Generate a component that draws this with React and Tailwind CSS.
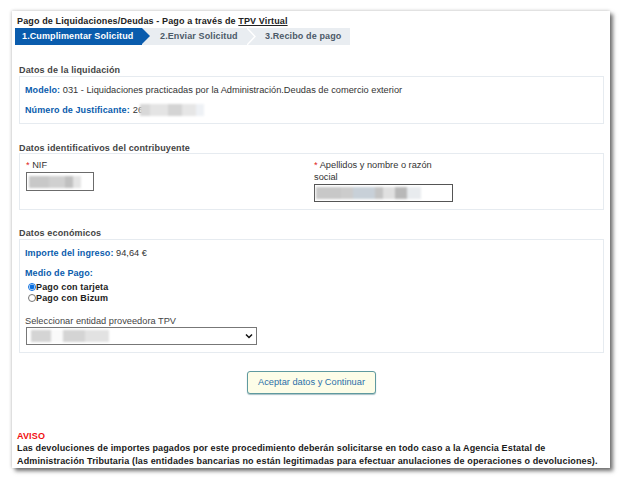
import React from "react";

const Redact = ({ blocks, className = "" }) => (
  <span className={`flex h-[12px] overflow-hidden blur-[1px] ${className}`}>
    {blocks.map(([w, c], i) => (
      <span key={i} className="block h-full" style={{ width: w, backgroundColor: c }} />
    ))}
  </span>
);

const Section = ({ title, className = "", boxClass = "", headClass = "leading-[11px]", children }) => (
  <section className={className}>
    <h2 className={`ml-[7px] text-[9px] font-bold tracking-[0.14px] text-[#444] ${headClass}`}>{title}</h2>
    <div className={`ml-[7px] mr-[6px] border border-[#e6ebf0] ${boxClass}`}>{children}</div>
  </section>
);

export default function App() {
  return (
    <div className="h-[479px] w-[621px] overflow-hidden bg-white pl-[12px] pt-[11px] font-['Liberation_Sans',Arial,sans-serif] text-[#333]">
      <div className="flex h-[457px] w-[598px] flex-col shadow-[3px_3px_4px_rgba(0,0,0,0.55),0_-1px_3px_rgba(0,0,0,0.08),-1px_0_3px_rgba(0,0,0,0.12)]">
        <h1 className="ml-[5px] mt-[5px] whitespace-nowrap text-[9px] leading-[11px] font-bold tracking-[0.13px] text-[#222]">
          Pago de Liquidaciones/Deudas - Pago a través de <span className="underline">TPV Virtual</span>
        </h1>

        <div className="ml-[3px] mt-[1px] flex h-[17px] w-[335px] items-stretch whitespace-nowrap bg-[#e9edf1] text-[9px] font-bold tracking-[0.12px] text-[#4c5a68]">
          <div className="relative flex w-[127px] shrink-0 items-center bg-[#0a5cad] pl-[7px] text-white">
            1.Cumplimentar Solicitud
            <span className="absolute left-[127px] top-0 h-0 w-0 border-y-[8.5px] border-l-[8px] border-y-transparent border-l-[#0a5cad]" />
          </div>
          <div className="relative flex w-[105px] shrink-0 items-center pl-[18px]">
            2.Enviar Solicitud
            <svg className="absolute right-[-9px] top-0 z-10" width="9" height="17" viewBox="0 0 9 17" fill="none">
              <path d="M0 0 L8 8.5 L0 17" stroke="#ffffff" strokeWidth="1.4" />
            </svg>
          </div>
          <div className="flex items-center pl-[18px]">3.Recibo de pago</div>
        </div>

        <Section title="Datos de la liquidación" className="mt-[20px]" boxClass="h-[48px] pl-[5px] pt-[2px] text-[9.25px] leading-[11px]">
          <p className="mt-[6px] whitespace-nowrap">
            <b className="text-[9px] font-bold tracking-[0.1px] text-[#0a5cad]">Modelo:</b> 031 - Liquidaciones practicadas por la Administración.Deudas de comercio exterior
          </p>
          <div className="mt-[8px] flex items-center">
            <b className="text-[9px] font-bold tracking-[0.1px] text-[#0a5cad]">Número de Justificante:</b>
            <span className="ml-[3px]">26</span>
            <Redact className="-ml-[3px]" blocks={[[10, "#d8d8d8"], [18, "#e4e4e4"], [14, "#d4d4d4"], [14, "#e6e6e6"], [8, "#eef1f5"]]} />
          </div>
        </Section>

        <Section title="Datos identificativos del contribuyente" className="mt-[18px]" headClass="pt-[1px] leading-[10px]" boxClass="flex h-[57px] text-[9.25px] leading-[12px]">
          <div className="w-[294px] shrink-0 pl-[6px] pt-[5px]">
            <div><span className="text-[#e02020]">*</span> NIF</div>
            <div className="mt-[1px] flex h-[19px] w-[68px] items-center border border-[#6b6b6b] pl-[2px] pr-[12px]">
              <Redact blocks={[[20, "#c8c8c8"], [16, "#d0d0d0"], [8, "#c0c0c0"], [8, "#e4e4e4"]]} />
            </div>
          </div>
          <div className="pt-[5px]">
            <div className="w-[130px]"><span className="text-[#e02020]">*</span> Apellidos y nombre o razón social</div>
            <div className="mt-[1px] flex h-[18px] w-[139px] items-center border border-[#555] pl-[1px] pr-[20px]">
              <Redact blocks={[[25, "#c8c8c8"], [12, "#ccc"], [22, "#c8d0d8"], [8, "#c4c4c4"], [12, "#e0e0e0"], [12, "#b8b8b8"], [14, "#e8ebee"]]} />
            </div>
          </div>
        </Section>

        <Section title="Datos económicos" className="mt-[17px]" headClass="leading-[12px]" boxClass="h-[114px] pl-[5px] text-[9.25px] leading-[12px]">
          <p className="mt-[7px]">
            <b className="text-[9px] font-bold tracking-[0.1px] text-[#0a5cad]">Importe del ingreso:</b> 94,64 €
          </p>
          <p className="mt-[8px] text-[9px] font-bold tracking-[0.1px] text-[#0a5cad]">Medio de Pago:</p>
          <label className="ml-[3px] mt-[2px] flex h-[11px] items-center text-[9px] font-bold tracking-[0.15px] text-[#222]">
            <input type="radio" name="pago" defaultChecked className="m-0 h-[8px] w-[8px] accent-[#0a6fe0]" />
            Pago con tarjeta
          </label>
          <label className="ml-[3px] flex h-[11px] items-center text-[9px] font-bold tracking-[0.15px] text-[#222]">
            <input type="radio" name="pago" className="m-0 h-[8px] w-[8px]" />
            Pago con Bizum
          </label>
          <p className="mt-[12px] whitespace-nowrap text-[#444]">Seleccionar entidad proveedora TPV</p>
          <div className="ml-[1px] flex h-[18px] w-[231px] items-center justify-between border border-[#777] pl-[4px] pr-[2px]">
            <Redact blocks={[[20, "#d4d4d4"], [12, "#fafafa"], [22, "#d4d4d4"], [24, "#e2e2e2"]]} />
            <svg width="10" height="10" viewBox="0 0 10 10" fill="none">
              <path d="M2 3.5 L5 6.5 L8 3.5" stroke="#111" strokeWidth="1.5" />
            </svg>
          </div>
        </Section>

        <div className="ml-[235px] mt-[15px]">
          <button className="h-[23px] w-[129px] rounded-[3px] border border-[#5f9a9f] bg-[#fdfde8] text-[9.25px] text-[#2b6fa8] shadow-[0_1px_1px_rgba(80,130,140,0.5)]">
            Aceptar datos y Continuar
          </button>
        </div>

        <div className="mb-[1px] ml-[5px] mt-auto whitespace-nowrap text-[9px] leading-[12.5px] font-bold tracking-[0.135px] text-[#1a1a1a]">
          <div className="text-[#f01010]">AVISO</div>
          <p>
            Las devoluciones de importes pagados por este procedimiento deberán solicitarse en todo caso a la Agencia Estatal de
            <br />
            Administración Tributaria (las entidades bancarias no están legitimadas para efectuar anulaciones de operaciones o devoluciones).
          </p>
        </div>
      </div>
    </div>
  );
}
